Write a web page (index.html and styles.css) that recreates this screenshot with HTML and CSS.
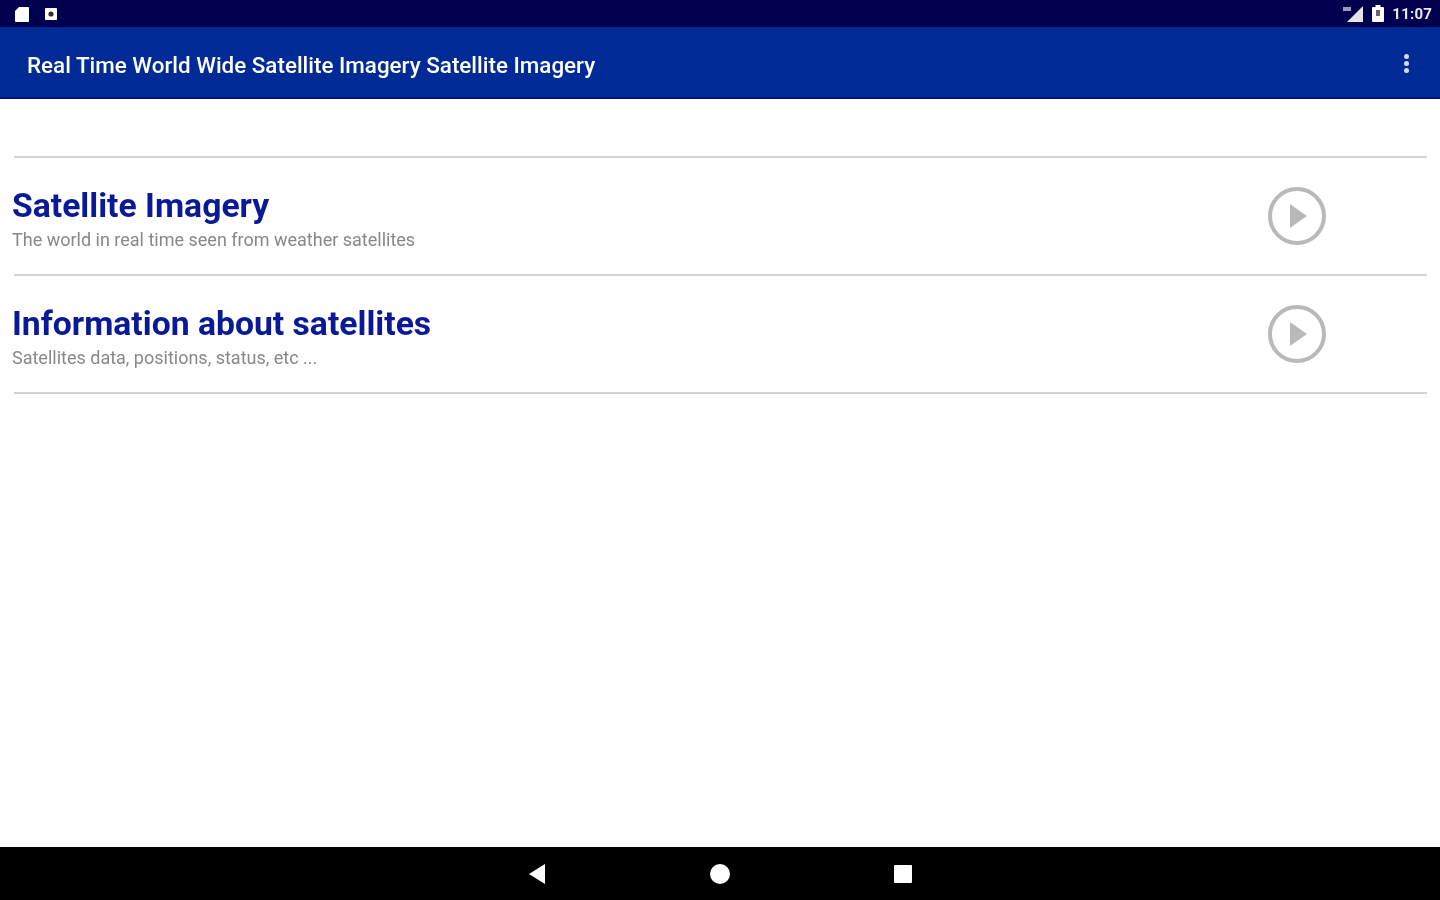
FILE: index.html
```html
<!DOCTYPE html>
<html lang="en">
<head>
    <meta charset="UTF-8">
    <title>Real Time World Wide Satellite Imagery</title>
    <link rel="stylesheet" href="styles.css">
</head>
<body>

    <!-- STATUS BAR -->
    <div class="status-bar">
        <div class="status-left">
            <svg class="icon-sd" width="16" height="16" viewBox="0 0 16 16"><path d="M5 1h9a1 1 0 0 1 1 1v13a1 1 0 0 1-1 1H2a1 1 0 0 1-1-1V5z" fill="#fff"/></svg>
            <svg class="icon-shot" width="14" height="14" viewBox="0 0 14 14"><rect x="1" y="1" width="12" height="12" rx="1" fill="#fff"/><circle cx="7" cy="7" r="2.6" fill="#333"/></svg>
        </div>
        <div class="status-right">
            <svg class="icon-signal" width="21" height="16" viewBox="0 0 21 16"><path d="M20 0v16H4z" fill="#e6e6e6"/><path d="M0 1h8v4H0z" fill="#9a9ab0"/></svg>
            <svg class="icon-battery" width="12" height="17" viewBox="0 0 12 17"><path d="M3.500 0h5v2H11a1 1 0 0 1 1 1v13a1 1 0 0 1-1 1H1a1 1 0 0 1-1-1V3a1 1 0 0 1 1-1h2.500z" fill="#fff"/><rect x="4" y="5" width="4" height="6" fill="#667"/></svg>
            <span class="clock">11:07</span>
        </div>
    </div>

    <!-- APP BAR -->
    <header class="app-bar">
        <h1>Real Time World Wide Satellite Imagery Satellite Imagery</h1>
        <div class="menu-dots"><span></span><span></span><span></span></div>
    </header>

    <!-- MENU LIST -->
    <main>
        <hr>
        <a class="row" href="#imagery">
            <div class="row-text">
                <h2>Satellite Imagery</h2>
                <p>The world in real time seen from weather satellites</p>
            </div>
            <svg class="play" width="60" height="60" viewBox="0 0 60 60"><circle cx="30" cy="30" r="27" fill="none" stroke="#b9b9b9" stroke-width="4"/><path d="M23 18l17 12-17 12z" fill="#b9b9b9"/></svg>
        </a>
        <hr>
        <a class="row" href="#info">
            <div class="row-text">
                <h2>Information about satellites</h2>
                <p>Satellites data, positions, status, etc ...</p>
            </div>
            <svg class="play" width="60" height="60" viewBox="0 0 60 60"><circle cx="30" cy="30" r="27" fill="none" stroke="#b9b9b9" stroke-width="4"/><path d="M23 18l17 12-17 12z" fill="#b9b9b9"/></svg>
        </a>
        <hr>
    </main>

    <!-- NAV BAR -->
    <footer class="nav-bar">
        <svg width="18" height="20" viewBox="0 0 18 20"><path d="M17 0v20L1 10z" fill="#fff"/></svg>
        <svg width="20" height="20" viewBox="0 0 20 20"><circle cx="10" cy="10" r="10" fill="#fff"/></svg>
        <svg width="18" height="18" viewBox="0 0 18 18"><rect width="18" height="18" rx="1" fill="#fff"/></svg>
    </footer>

</body>
</html>
```

FILE: styles.css
```css
/* Basic Reset & Body Styling */
body {
    margin: 0;
    height: 900px;
    display: flex;
    flex-direction: column;
    overflow: hidden;
    background-color: #fff;
    font-family: Roboto, "Liberation Sans", sans-serif;
    filter: blur(0.5px);
}

/* Status Bar */
.status-bar {
    height: 27px;
    display: flex;
    justify-content: space-between;
    align-items: center;
    padding: 0 8px 0 14px;
    background-color: #00004f;
    color: #fff;
}
.status-left,
.status-right {
    display: flex;
    align-items: center;
}
.status-left {
    gap: 14px;
}
.status-right {
    gap: 8px;
}
.clock {
    font-size: 15px;
    font-weight: 700;
    letter-spacing: 0.2px;
    color: #e8e8ee;
}

/* App Bar */
.app-bar {
    height: 64px;
    display: flex;
    justify-content: space-between;
    align-items: center;
    padding: 6px 31px 0 27px;
    background-color: #002a96;
    border-bottom: 2px solid #00108c;
    color: #fff;
}
.app-bar h1 {
    margin: 0;
    font-size: 22.4px;
    font-weight: 500;
}
.menu-dots {
    display: flex;
    flex-direction: column;
    gap: 2px;
    margin-bottom: 3px;
}
.menu-dots span {
    width: 5px;
    height: 5px;
    background-color: #d5dcf2;
    border-radius: 50%;
}

/* Menu List */
main {
    flex: 1;
    padding-top: 57px;
}
hr {
    height: 2px;
    margin: 0 13px 0 14px;
    border: none;
    background-color: #d2d2d2;
}
.row {
    height: 116px;
    display: flex;
    justify-content: space-between;
    align-items: center;
    padding: 0 113px 0 12px;
    text-decoration: none;
}
.row-text {
    padding-top: 4px;
}
.row h2 {
    margin: 0;
    font-size: 33.7px;
    font-weight: 700;
    line-height: 40px;
    color: #0a1a96;
}
.row p {
    margin: 4px 0 0;
    font-size: 18px;
    line-height: 20px;
    color: #888;
}

/* Nav Bar */
.nav-bar {
    height: 53px;
    display: flex;
    justify-content: center;
    align-items: center;
    gap: 164px;
    background-color: #000;
}
```
